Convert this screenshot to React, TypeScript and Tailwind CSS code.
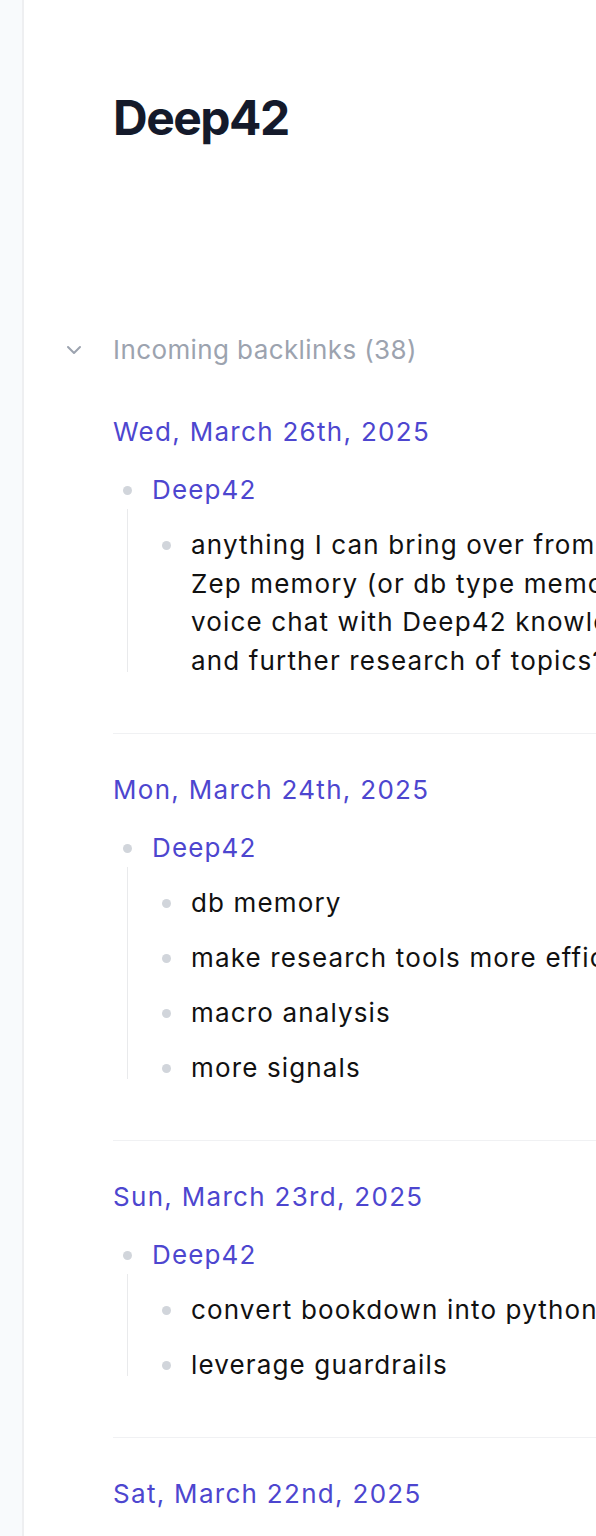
import React from 'react';

type Backlink = {
  date: string;
  items: string[][];
};

const backlinks: Backlink[] = [
  {
    date: 'Wed, March 26th, 2025',
    items: [
      [
        'anything I can bring over from AgentZero?',
        'Zep memory (or db type memory) for',
        'voice chat with Deep42 knowledge base',
        'and further research of topics?',
      ],
    ],
  },
  {
    date: 'Mon, March 24th, 2025',
    items: [['db memory'], ['make research tools more efficient'], ['macro analysis'], ['more signals']],
  },
  {
    date: 'Sun, March 23rd, 2025',
    items: [['convert bookdown into python scripts'], ['leverage guardrails']],
  },
];

const Bullet: React.FC = () => (
  <div className="w-[28px] h-[38.5px] flex items-center justify-center flex-shrink-0">
    <span className="w-[9px] h-[9px] rounded-full bg-[#d1d5db]" />
  </div>
);

const App: React.FC = () => {
  return (
    <div
      className="flex min-h-screen bg-white"
      style={{ fontFamily: 'Inter, "Noto Sans", sans-serif' }}
    >
      {/* sidebar edge */}
      <aside className="w-[24px] flex-shrink-0 bg-[#f8fafc] border-r-2 border-[#eeeff1]" />

      <main className="flex-1 overflow-hidden pl-[89px] pt-[89px] pb-10">
        <h1 className="text-[48px] leading-[58px] font-bold text-[#141a2b] tracking-[-1.5px]">Deep42</h1>

        {/* backlinks header */}
        <div className="mt-[184px] -ml-[51px] flex items-center h-[38.5px]">
          <div className="w-[24px] mr-[27px] flex justify-center">
            <svg width="16" height="10" viewBox="0 0 16 10" fill="none">
              <polyline points="2,2 8,8 14,2" stroke="#9ca3af" strokeWidth="2" strokeLinecap="round" strokeLinejoin="round" />
            </svg>
          </div>
          <span className="text-[26px] leading-[38.5px] text-[#9ca3af] tracking-[0.4px] whitespace-nowrap">
            Incoming backlinks (38)
          </span>
        </div>

        <div className="mt-[43.5px] tracking-[1.15px]">
          {backlinks.map((section, i) => (
            <section key={i}>
              {i > 0 && <div className="h-px bg-[#f0f1f3] w-[1200px] mt-[44.5px] mb-[37px]" />}
              <div className="text-[26px] leading-[38.5px] text-[#4d46cf] whitespace-nowrap tracking-[1.3px]">{section.date}</div>

              <div className="mt-[11.25px]">
                <div className="flex py-[8.25px]">
                  <Bullet />
                  <span className="ml-[11px] text-[26px] leading-[38.5px] text-[#4d46cf]">Deep42</span>
                </div>

                <div className="flex">
                  <div className="w-[14px] flex-shrink-0" />
                  <div className="w-px bg-[#e9eaec] -mt-[8.5px] mb-[16.5px] flex-shrink-0" />
                  <div className="w-[24px] flex-shrink-0" />
                  <div className="flex flex-col">
                    {section.items.map((lines, j) => (
                      <div key={j} className="flex py-[8.25px]">
                        <Bullet />
                        <div className="ml-[11px] text-[26px] leading-[38.5px] text-[#111111] whitespace-nowrap">
                          {lines.map((l, k) => (
                            <div key={k}>{l}</div>
                          ))}
                        </div>
                      </div>
                    ))}
                  </div>
                </div>
              </div>
            </section>
          ))}

          <div className="h-px bg-[#f0f1f3] w-[1200px] mt-[44.5px] mb-[37px]" />
          <div className="text-[26px] leading-[38.5px] text-[#4d46cf] whitespace-nowrap tracking-[1.3px]">
            Sat, March 22nd, 2025
          </div>
        </div>
      </main>
    </div>
  );
};

export default App;
